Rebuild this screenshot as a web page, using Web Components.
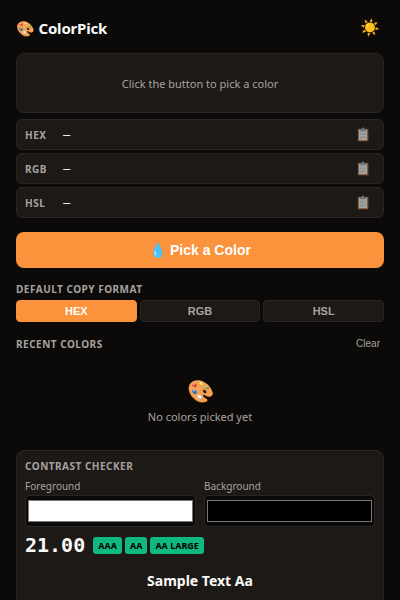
<!DOCTYPE html>
<html lang="en">
<head>
<meta charset="utf-8">
<title>ColorPick</title>
<style>
:root{--bg:#0c0a09;--card:#1c1917;--line:#292524;--text:#fafaf9;--muted:#a8a29e;--accent:#fb923c;--ok:#10b981}
html,body{margin:0;height:600px;overflow:hidden;background:var(--bg)}
body{font:13px/1.5 "Noto Sans",sans-serif;color:var(--text)}
</style>
</head>
<body>
<color-pick-app></color-pick-app>
<script>
const define = (name, css, html) => customElements.define(name, class extends HTMLElement {
  constructor() {
    super();
    const t = document.createElement('template');
    t.innerHTML = `<style>*{box-sizing:border-box}:host{display:block;box-sizing:border-box}${css}</style>${html(this)}`;
    this.attachShadow({mode: 'open'}).append(t.content.cloneNode(true));
  }
});

define('app-header', `
  :host{display:flex;align-items:center;justify-content:space-between;height:25px}
  h1{margin:0;padding-bottom:2px;font-size:15px;line-height:20px;font-weight:700;letter-spacing:-.2px}
  button{border:0;background:none;padding:0 4px;font:16px/24px "Liberation Sans",sans-serif;color:inherit;transform:translateY(-1px)}`,
  () => `<h1><slot></slot></h1><button aria-label="Theme">☀️</button>`);

define('color-preview', `
  :host{display:flex;align-items:center;justify-content:center;height:60px;margin-top:12px;border:1px solid var(--line);border-radius:8px;background:var(--card);color:var(--muted);font-size:11px;padding-top:2px}`,
  () => `<slot></slot>`);

define('value-row', `
  :host{display:flex;align-items:center;height:31px;padding:0 8px;border:1px solid var(--line);border-radius:6px;background:var(--card)}
  .name{width:30px;margin-right:8px;padding-top:2px;font-size:10px;font-weight:700;letter-spacing:.5px;color:var(--muted)}
  .value{flex:1;font:12px/18px "DejaVu Sans Mono",monospace}
  button{border:0;background:none;padding:0 4px;opacity:.6;font:13px/16px "Liberation Sans",sans-serif;color:var(--muted)}`,
  () => `<span class="name"><slot></slot></span><span class="value">—</span><button aria-label="Copy">📋</button>`);

define('pick-button', `
  button{display:block;width:100%;height:36px;padding:0;border:0;border-radius:8px;background:var(--accent);color:#fff;font:700 14px "Liberation Sans",sans-serif}`,
  () => `<button><slot></slot></button>`);

define('section-label', `
  :host{font-size:10px;line-height:15px;font-weight:700;letter-spacing:.5px;color:var(--muted);text-transform:uppercase}`,
  () => `<slot></slot>`);

define('format-option', `
  :host{flex:1;display:flex}
  button{flex:1;height:22px;padding:0;border:1px solid var(--line);border-radius:4px;background:var(--card);color:var(--muted);font:700 11px "Liberation Sans",sans-serif}
  :host([active]) button{background:var(--accent);border-color:var(--accent);color:#fff}`,
  () => `<button><slot></slot></button>`);

define('empty-state', `
  :host{display:flex;flex-direction:column;align-items:center;color:var(--muted);font-size:11px;line-height:16px}
  .icon{font-size:22px;line-height:34px;margin-bottom:2px}`,
  () => `<span class="icon">🎨</span><slot></slot>`);

define('color-field', `
  :host{flex:1}
  label{display:block;font-size:10px;line-height:15px;color:var(--muted)}
  input{display:block;width:100%;height:32px;margin:1px 0 0;padding:0;border:1px solid var(--line);border-radius:4px;background:var(--bg)}`,
  el => `<label><slot></slot><input type="color" value="${el.getAttribute('value')}"></label>`);

define('pass-badge', `
  :host{padding:2px 5px;border-radius:3px;background:var(--ok);color:#000;font-size:9px;line-height:13px;font-weight:700}`,
  () => `<slot></slot>`);

define('contrast-checker', `
  :host{height:200px;padding:8px;border:1px solid var(--line);border-radius:8px;background:var(--card)}
  .fields{display:flex;gap:8px;margin-top:5px}
  .result{display:flex;align-items:center;height:24px;margin-top:6px}
  .ratio{font:700 20px/24px "DejaVu Sans Mono",monospace;margin-right:8px}
  .badges{display:flex;gap:3px}
  .sample{margin-top:14px;text-align:center;font-size:14px;line-height:20px;font-weight:700}`,
  () => `<section-label>Contrast Checker</section-label>
  <div class="fields"><color-field value="#ffffff">Foreground</color-field><color-field value="#000000">Background</color-field></div>
  <div class="result"><span class="ratio">21.00</span><div class="badges"><pass-badge>AAA</pass-badge><pass-badge>AA</pass-badge><pass-badge>AA LARGE</pass-badge></div></div>
  <div class="sample">Sample Text Aa</div>`);

define('color-pick-app', `
  :host{padding:16px;height:600px;overflow:hidden}
  .rows{display:grid;gap:3px;margin:6px 0 14px}
  .format{margin-top:14px}
  .options{display:flex;gap:3px;margin-top:3px}
  .recent{display:flex;justify-content:space-between;align-items:center;height:15px;margin-top:14px}
  .recent section-label{padding-top:2px}
  .recent button{border:0;background:none;padding:0 4px;color:var(--muted);font:10px/15px "Liberation Sans",sans-serif}
  empty-state{margin-top:22px}
  contrast-checker{margin-top:25px}`,
  () => `<app-header>🎨 ColorPick</app-header>
  <color-preview>Click the button to pick a color</color-preview>
  <div class="rows"><value-row>HEX</value-row><value-row>RGB</value-row><value-row>HSL</value-row></div>
  <pick-button>💧 Pick a Color</pick-button>
  <section-label class="format">Default Copy Format</section-label>
  <div class="options"><format-option active>HEX</format-option><format-option>RGB</format-option><format-option>HSL</format-option></div>
  <div class="recent"><section-label>Recent Colors</section-label><button>Clear</button></div>
  <empty-state>No colors picked yet</empty-state>
  <contrast-checker></contrast-checker>`);
</script>
</body>
</html>
